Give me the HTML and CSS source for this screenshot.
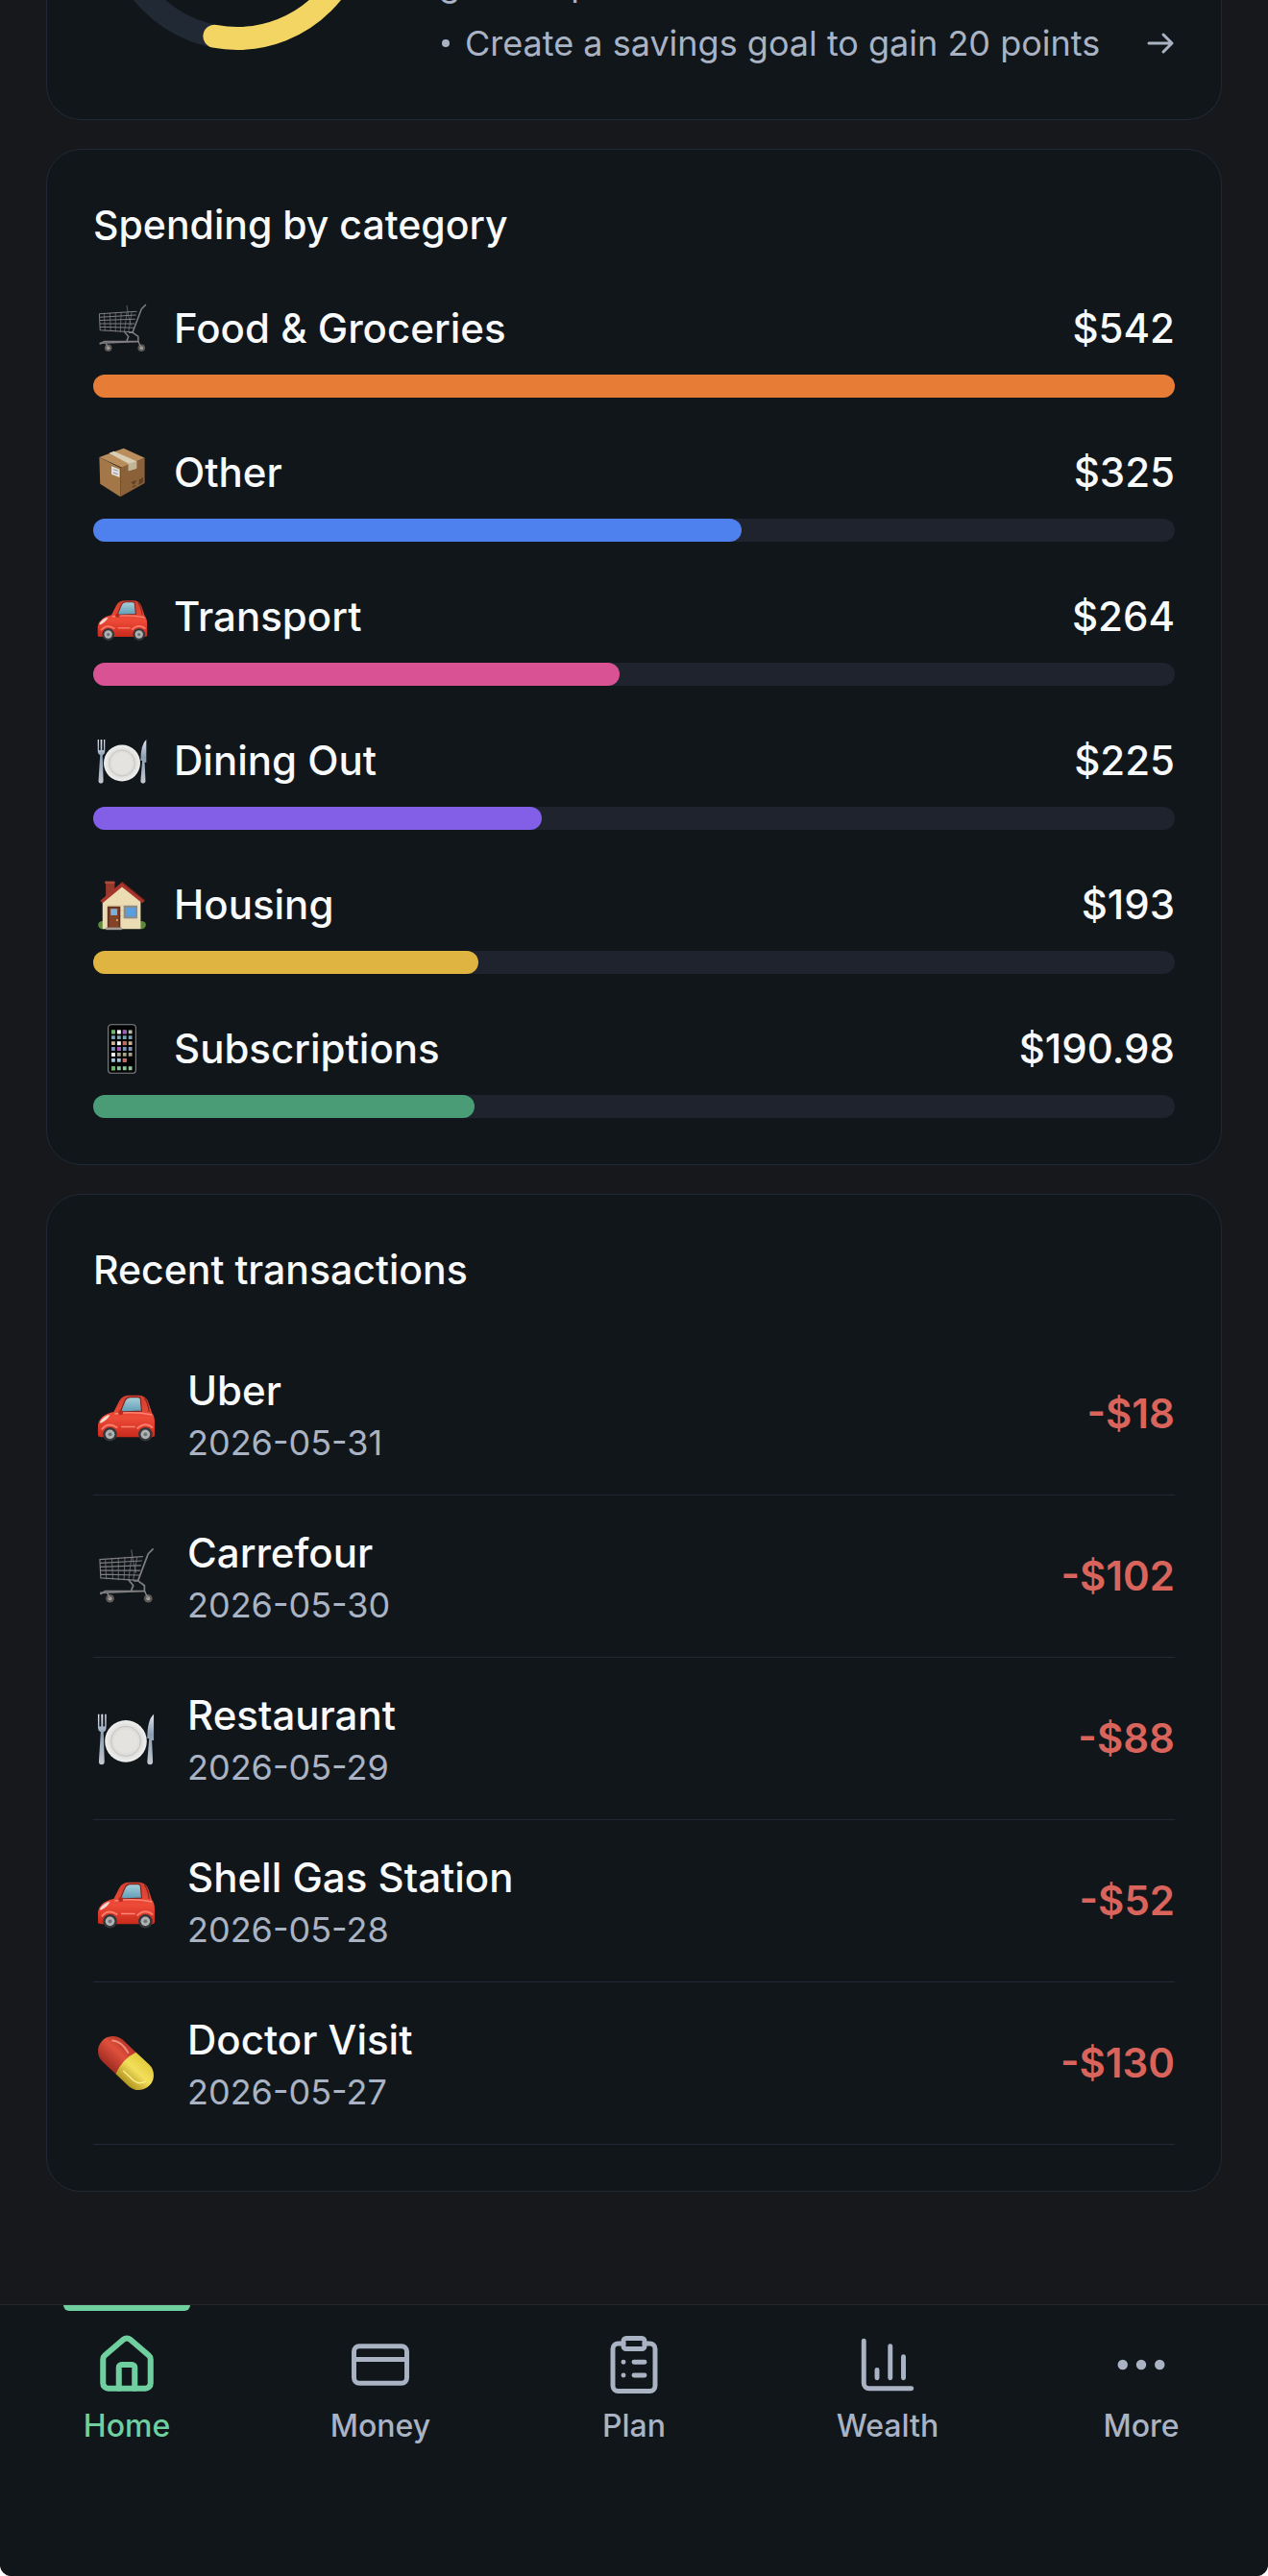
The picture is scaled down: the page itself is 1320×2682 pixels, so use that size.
FILE: index.html
```html
<!DOCTYPE html>
<html lang="en">
<head>
<meta charset="UTF-8" />
<meta name="viewport" content="width=device-width, initial-scale=1" />
<title>Home</title>
<link rel="stylesheet" href="styles.css">
</head>
<body>

<!-- shared pictures -->
<svg class="defs" width="0" height="0" aria-hidden="true">
  <defs>
    <linearGradient id="gRed" x1="0" y1="0" x2="0" y2="1">
      <stop offset="0" stop-color="#d23f2e"/><stop offset=".55" stop-color="#ee4a38"/><stop offset="1" stop-color="#c82a1c"/>
    </linearGradient>
    <linearGradient id="gGlass" x1="0" y1="0" x2="0" y2="1">
      <stop offset="0" stop-color="#a9d0da"/><stop offset="1" stop-color="#5d9db5"/>
    </linearGradient>
    <linearGradient id="gSteel" x1="0" y1="0" x2="0" y2="1">
      <stop offset="0" stop-color="#dfe6ee"/><stop offset=".4" stop-color="#8d9db3"/><stop offset="1" stop-color="#c3c9d0"/>
    </linearGradient>
    <linearGradient id="gPillRed" x1="0" y1="0" x2="0" y2="1">
      <stop offset="0" stop-color="#b8372a"/><stop offset=".4" stop-color="#e0503c"/><stop offset="1" stop-color="#a02c22"/>
    </linearGradient>
    <linearGradient id="gPillYellow" x1="0" y1="0" x2="0" y2="1">
      <stop offset="0" stop-color="#e3cb3c"/><stop offset=".45" stop-color="#f3df5c"/><stop offset="1" stop-color="#b3961f"/>
    </linearGradient>
    <radialGradient id="gPlate">
      <stop offset="0" stop-color="#e2e2e0"/><stop offset=".65" stop-color="#d9d9d7"/><stop offset="1" stop-color="#f0f0ee"/>
    </radialGradient>

    <symbol id="cart" viewBox="0 0 64 64">
      <g fill="none" stroke="#7f7e80" stroke-width="1.2" stroke-linecap="round" stroke-linejoin="round">
        <path d="M4 14 50 11M5 18 49 15.500M5 22 48 20.500M5 26 47 26M5 30 46 31M5 34 45 36.500M4 14 5 34"/>
        <path stroke-width=".8" d="M10 14 11 35M17 13 18 35M24 13 24 36M31 12 30 36M38 12 35 36M44 12 40 36M38 4 40 17 43 28"/>
        <path stroke-width="1.8" d="M61 3 56 8 45 37H41M45 37 52 42V48L5 50M35 36 40 42 38 47"/>
        <path stroke-width="1.8" d="M5 51 10 48 52 48"/>
      </g>
      <circle cx="15" cy="56" r="4.500" fill="#5d5a58"/><circle cx="15" cy="56" r="2" fill="#aaa5a0"/>
      <circle cx="56" cy="56" r="4.500" fill="#5d5a58"/><circle cx="56" cy="56" r="2" fill="#aaa5a0"/>
      <path d="M12 50 15 56M52 48 56 56" stroke="#8a8988" stroke-width="1.500"/>
    </symbol>

    <symbol id="box" viewBox="0 0 64 64">
      <path d="M4 13 34 2 60 14 32 26Z" fill="#b98d5c"/>
      <path d="M4 13 30 26V62L5 46Z" fill="#a37747"/>
      <path d="M30 26 60 14V45L30 62Z" fill="#8a6138"/>
      <path d="M16 8 22 5.500 50 18V27L40 30V21Z" fill="#d8cdb5"/>
      <path d="M40 21 50 18V27L40 30Z" fill="#c2b496"/>
      <path d="M19 24 29 28V38L19 34Z" fill="#e4e2de"/>
      <path d="M21 28 27 30M21 32 27 34" stroke="#8e9096" stroke-width="1.200"/>
      <path d="M43 44 50 41 47 47ZM53 41 58 38V44L53 47Z" fill="#5f4125"/>
      <path d="M45 50 49 48" stroke="#5f4125" stroke-width="1.500"/>
    </symbol>

    <symbol id="car" viewBox="0 0 64 64">
      <path d="M2 55V44Q4 33 19 30L25 18Q28 12 36 12H46Q53 12 56 19L60 31Q63 34 63 42V55Q63 57 60 57H6Q2 57 2 55Z" fill="url(#gRed)"/>
      <path d="M26 30 31 18Q33 14 37 14H45Q48 14 48 18L49 29Z" fill="url(#gGlass)" stroke="#7e241c" stroke-width="1.200"/>
      <path d="M52 15Q56 20 57 30" fill="none" stroke="#7e241c" stroke-width="1.200"/>
      <path d="M4 41Q8 34 15 33Q12 39 5 42Z" fill="#f5dcd4"/>
      <path d="M20 32Q40 29 60 33M27 46H42" fill="none" stroke="#ff8474" stroke-width="1.500"/>
      <path d="M6 49Q13 40 23 47M44 48Q53 40 61 47" fill="none" stroke="#ff7c6a" stroke-width="2"/>
      <rect x="24" y="28" width="5" height="5" rx="2" fill="#b8281b"/>
      <g fill="#35363a"><circle cx="15" cy="54" r="7.500"/><circle cx="53" cy="54" r="7.500"/></g>
      <g fill="#aeb2b2"><circle cx="15" cy="54" r="5"/><circle cx="53" cy="54" r="5"/></g>
      <g fill="#6e7374"><circle cx="15" cy="54" r="2"/><circle cx="53" cy="54" r="2"/></g>
    </symbol>

    <symbol id="plate" viewBox="0 0 64 64">
      <circle cx="32" cy="35" r="22.500" fill="url(#gPlate)"/>
      <circle cx="32" cy="35" r="16" fill="#deddda" stroke="#c3c2c0" stroke-width="1"/>
      <circle cx="32" cy="35" r="13" fill="#e4e3e0"/>
      <path d="M2 6V19Q2 24 5 25L3 57Q3 60 6 60T9 57L8 25Q11 24 11 19V6H9.500V19H7.500V6H5.500V19H3.500V6Z" fill="url(#gSteel)"/>
      <path d="M62 6Q55 12 55 32H57L55 57Q55 60 58 60T61 57L60 34H62Z" fill="url(#gSteel)"/>
    </symbol>

    <symbol id="house" viewBox="0 0 64 64">
      <ellipse cx="8" cy="57" rx="5.500" ry="5" fill="#5d8a38"/><ellipse cx="56" cy="57" rx="5.500" ry="5" fill="#5d8a38"/>
      <rect x="12" y="4" width="11" height="20" fill="#96392d"/><rect x="11" y="3" width="12" height="3" fill="#b04a3a"/>
      <path d="M8 28 32 7 55 28V62H8Z" fill="#ecdcb4"/>
      <path d="M14 33H50M14 39H50M14 46H50" stroke="#dcc99c" stroke-width="1"/>
      <path d="M32 4 60 27 57 30 32 10 8 30 5 27Z" fill="#a8352b"/>
      <path d="M32 4 60 27" stroke="#7e251f" stroke-width="1.500"/>
      <rect x="14" y="34" width="16" height="28" fill="#5f3020"/><rect x="16" y="36" width="12" height="26" fill="#824329"/>
      <rect x="18" y="37" width="8" height="8" fill="#7bb0dc"/><circle cx="26" cy="51" r="1.200" fill="#e0c060"/>
      <rect x="34" y="33" width="17" height="16" fill="#8c8b88"/><rect x="36.500" y="35.500" width="12" height="11" fill="#5b9ede"/>
      <rect x="12" y="60" width="20" height="3" fill="#a49d93"/>
    </symbol>

    <symbol id="phone" viewBox="0 0 64 64">
      <rect x="15" y="2" width="34" height="60" rx="4" fill="#020203" stroke="#85878a" stroke-width="1.300"/>
      <g stroke-width="4.500" stroke-dasharray="4.500 2.500">
        <path d="M19 11H47" stroke="#b9bfae"/><path d="M19 18H47" stroke="#7aa4b0"/><path d="M19 25H47" stroke="#c9b59a"/>
        <path d="M19 32H47" stroke="#7f93b8"/><path d="M19 39H47" stroke="#a7a690"/><path d="M19 46H39" stroke="#a4c4da"/>
        <path d="M19 56H47" stroke="#8fc59a"/>
      </g>
      <g fill="#6cb765"><rect x="19" y="9" width="4.500" height="4.500"/><rect x="19" y="54" width="4.500" height="4.500"/></g>
      <g fill="#a25bbb"><rect x="33" y="9" width="4.500" height="4.500"/><rect x="26" y="30" width="4.500" height="4.500"/></g>
      <g fill="#c26a60"><rect x="33" y="23" width="4.500" height="4.500"/><rect x="33" y="44" width="4.500" height="4.500"/></g>
      <g fill="#f5f5f5"><rect x="26" y="9" width="4.500" height="4.500"/><rect x="19" y="37" width="4.500" height="4.500"/><rect x="26" y="23" width="4.500" height="4.500"/></g>
    </symbol>

    <symbol id="pill" viewBox="0 0 64 64">
      <g transform="rotate(43 32 32)">
        <path d="M32 16H13A16 16 0 0 0 13 48H32Z" fill="url(#gPillRed)"/>
        <path d="M32 16H51A16 16 0 0 1 51 48H32Q26 32 32 16Z" fill="url(#gPillYellow)"/>
        <path d="M5 24Q12 18 26 22" fill="none" stroke="#f08c7a" stroke-width="2" stroke-linecap="round"/>
        <path d="M36 40H51Q59 39 61 32" fill="none" stroke="#fbf08a" stroke-width="1.500" stroke-linecap="round"/>
      </g>
    </symbol>
  </defs>
</svg>

<main>
  <section class="card score-card">
    <svg class="ring" viewBox="0 0 300 300" role="img" aria-label="53 points">
      <circle class="ring-track" cx="150" cy="150" r="126"/>
      <circle class="ring-value" cx="150" cy="150" r="126" pathLength="100" stroke-dasharray="53 100" transform="rotate(-90 150 150)"/>
      <text class="ring-label" x="150" y="230">points</text>
    </svg>
    <ul class="tips">
      <li><span>gain 20 points</span></li>
      <li>
        <a href="#">
          <span class="dot"></span>
          <span class="tip-text">Create a savings goal to gain 20 points</span>
          <svg class="arrow" viewBox="0 0 30 30"><path d="M3 15H27M18 6 27 15 18 24"/></svg>
        </a>
      </li>
    </ul>
  </section>

  <section class="card">
    <h2>Spending by category</h2>
    <ul class="categories">
      <li>
        <div class="cat-head"><svg class="cat-icon"><use href="#cart"/></svg><span>Food &amp; Groceries</span><span class="cat-sum">$542</span></div>
        <div class="bar"><div class="fill orange" style="width:100%"></div></div>
      </li>
      <li>
        <div class="cat-head"><svg class="cat-icon"><use href="#box"/></svg><span>Other</span><span class="cat-sum">$325</span></div>
        <div class="bar"><div class="fill blue" style="width:59.96%"></div></div>
      </li>
      <li>
        <div class="cat-head"><svg class="cat-icon"><use href="#car"/></svg><span>Transport</span><span class="cat-sum">$264</span></div>
        <div class="bar"><div class="fill pink" style="width:48.71%"></div></div>
      </li>
      <li>
        <div class="cat-head"><svg class="cat-icon"><use href="#plate"/></svg><span>Dining Out</span><span class="cat-sum">$225</span></div>
        <div class="bar"><div class="fill purple" style="width:41.51%"></div></div>
      </li>
      <li>
        <div class="cat-head"><svg class="cat-icon"><use href="#house"/></svg><span>Housing</span><span class="cat-sum">$193</span></div>
        <div class="bar"><div class="fill yellow" style="width:35.61%"></div></div>
      </li>
      <li>
        <div class="cat-head"><svg class="cat-icon"><use href="#phone"/></svg><span>Subscriptions</span><span class="cat-sum">$190.98</span></div>
        <div class="bar"><div class="fill green" style="width:35.24%"></div></div>
      </li>
    </ul>
  </section>

  <section class="card">
    <h2>Recent transactions</h2>
    <ul class="transactions">
      <li>
        <svg class="tx-icon"><use href="#car"/></svg>
        <div class="tx-info"><div class="tx-name">Uber</div><div class="tx-date">2026-05-31</div></div>
        <span class="tx-sum">-$18</span>
      </li>
      <li>
        <svg class="tx-icon"><use href="#cart"/></svg>
        <div class="tx-info"><div class="tx-name">Carrefour</div><div class="tx-date">2026-05-30</div></div>
        <span class="tx-sum">-$102</span>
      </li>
      <li>
        <svg class="tx-icon"><use href="#plate"/></svg>
        <div class="tx-info"><div class="tx-name">Restaurant</div><div class="tx-date">2026-05-29</div></div>
        <span class="tx-sum">-$88</span>
      </li>
      <li>
        <svg class="tx-icon"><use href="#car"/></svg>
        <div class="tx-info"><div class="tx-name">Shell Gas Station</div><div class="tx-date">2026-05-28</div></div>
        <span class="tx-sum">-$52</span>
      </li>
      <li>
        <svg class="tx-icon"><use href="#pill"/></svg>
        <div class="tx-info"><div class="tx-name">Doctor Visit</div><div class="tx-date">2026-05-27</div></div>
        <span class="tx-sum">-$130</span>
      </li>
    </ul>
  </section>
</main>

<nav>
  <a href="#" class="active">
    <svg viewBox="0 0 24 24"><path d="M15 21v-8a1 1 0 0 0-1-1h-4a1 1 0 0 0-1 1v8"/><path d="M3 10a2 2 0 0 1 .709-1.528l7-5.999a2 2 0 0 1 2.582 0l7 5.999A2 2 0 0 1 21 10v9a2 2 0 0 1-2 2H5a2 2 0 0 1-2-2z"/></svg>
    <span>Home</span>
  </a>
  <a href="#">
    <svg viewBox="0 0 24 24"><rect x="2" y="5" width="20" height="14" rx="2"/><path d="M2 10h20"/></svg>
    <span>Money</span>
  </a>
  <a href="#">
    <svg viewBox="0 0 24 24"><rect x="8" y="2" width="8" height="4" rx="1"/><path d="M16 4h2a2 2 0 0 1 2 2v14a2 2 0 0 1-2 2H6a2 2 0 0 1-2-2V6a2 2 0 0 1 2-2h2M12 11h4M12 16h4M8 11h.01M8 16h.01"/></svg>
    <span>Plan</span>
  </a>
  <a href="#">
    <svg viewBox="0 0 24 24"><path d="M3 3v16a2 2 0 0 0 2 2h16M18 17V9M13 17V5M8 17v-3"/></svg>
    <span>Wealth</span>
  </a>
  <a href="#">
    <svg viewBox="0 0 24 24"><g fill="currentColor"><circle cx="5" cy="12" r="1"/><circle cx="12" cy="12" r="1"/><circle cx="19" cy="12" r="1"/></g></svg>
    <span>More</span>
  </a>
</nav>

</body>
</html>
```
FILE: styles.css
```css
* { box-sizing: border-box; }
html { background: #fff; }
body {
  font-family: Inter, "Liberation Sans", sans-serif;
  font-size: 42px;
  line-height: 60px;
  margin: 0;
  color: #f8fafc;
  background: #17181b;
  border-radius: 0 0 12px 12px;
  overflow-x: hidden;
  min-height: 100vh;
  display: flex; flex-direction: column;
}
ul { list-style: none; margin: 0; padding: 0; }
a { color: inherit; text-decoration: none; }
.defs { position: absolute; }
main {
  flex-grow: 1;
  padding: 0 48px 96px;
  display: flex; flex-direction: column; gap: 30px;
}
.card {
  background: #11161a;
  border: 1px solid #212936;
  border-radius: 36px;
  padding: 48px;
}
h2 {
  font-size: 41px;
  font-weight: 500;
  margin: 0;
}

/* score */
.score-card {
  height: 125px;
  border-top: none;
  border-radius: 0 0 36px 36px;
  padding-top: 0;
  display: flex; align-items: flex-end; gap: 60px;
  overflow: hidden;
}
.ring {
  width: 300px; height: 300px;
  flex-shrink: 0;
  margin-bottom: 12px;
}
.ring circle { fill: none; stroke-width: 24; }
.ring .ring-track { stroke: #212a34; }
.ring .ring-value { stroke: #f3d563; stroke-linecap: round; }
.ring-label { fill: #a9b3c4; font-size: 30px; text-anchor: middle; }
.tips {
  flex-grow: 1;
  font-size: 36px;
  line-height: 54px;
  color: #a9b3c4;
  display: flex; flex-direction: column; gap: 8px;
  padding-bottom: 4px;
}
.tips a { display: flex; align-items: center; }
.dot {
  width: 8px; height: 8px;
  border-radius: 50%;
  background: #a9b3c4;
  margin: 0 16px 0 3px;
}
.tip-text { flex-grow: 1; }
.arrow {
  width: 30px; height: 30px;
  fill: none; stroke: #a9b3c4;
  stroke-width: 3; stroke-linecap: round; stroke-linejoin: round;
}

/* spending */
.categories {
  margin-top: 48px;
  display: flex; flex-direction: column; gap: 48px;
}
.cat-head {
  display: flex; align-items: center; gap: 24px;
  margin-bottom: 18px;
  font-weight: 500;
}
.cat-icon { width: 60px; height: 54px; }
.cat-sum { margin-left: auto; }
.bar {
  height: 24px;
  border-radius: 12px;
  background: #1e232e;
}
.fill { height: 24px; border-radius: 12px; }
.orange { background: #e67c36; }
.blue { background: #4e81ee; }
.pink { background: #d95394; }
.purple { background: #835fe8; }
.yellow { background: #e0b440; }
.green { background: #4a9c76; }

/* transactions */
.transactions { margin-top: 36px; }
.transactions li {
  display: flex; align-items: center; gap: 30px;
  padding: 30px 0;
  border-bottom: 1px solid #212936;
}
.tx-icon { width: 68px; height: 62px; }
.tx-info { flex-grow: 1; }
.tx-name { font-weight: 500; }
.tx-date {
  font-size: 36px;
  line-height: 48px;
  color: #a9b3c4;
}
.tx-sum { color: #d9645c; font-weight: 600; }

/* bottom bar */
nav {
  display: flex;
  background: #11161a;
  border-top: 1px solid #26272b;
  border-radius: 0 0 12px 12px;
  padding-bottom: 137px;
}
nav a {
  flex: 1;
  display: flex; flex-direction: column; align-items: center; gap: 12px;
  padding-top: 29px;
  position: relative;
  color: #a9b3c4;
  font-size: 32px;
  line-height: 38px;
  font-weight: 500;
}
nav svg {
  width: 66px; height: 66px;
  fill: none; stroke: currentColor;
  stroke-width: 1.8; stroke-linecap: round; stroke-linejoin: round;
}
nav .active { color: #6fcf9f; }
nav .active svg { stroke-width: 2.2; }
nav .active::before {
  content: "";
  position: absolute; top: 0; left: 25%;
  width: 50%; height: 6px;
  background: #6fcf9f;
  border-radius: 0 0 6px 6px;
}
```
